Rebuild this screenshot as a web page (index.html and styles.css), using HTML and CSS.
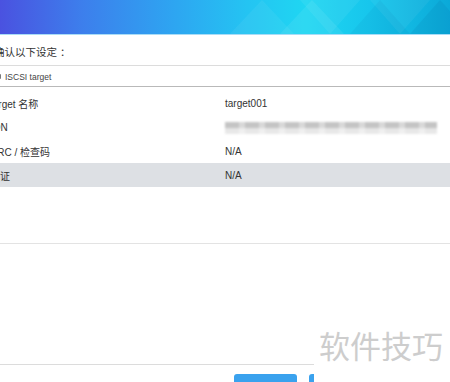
FILE: index.html
```html
<!DOCTYPE html>
<html lang="zh-CN">
<head>
<meta charset="utf-8">
<link rel="stylesheet" href="styles.css">
</head>
<body>
<div class="page">
  <header class="header">
    <svg class="header-deco" width="450" height="34" viewBox="0 0 450 34" aria-hidden="true">
      <polygon points="230,34 262,0 294,34" fill="#ffffff" opacity="0.05"/>
      <polygon points="280,34 312,0 344,34" fill="#ffffff" opacity="0.07"/>
      <polygon points="300,0 330,34 360,0" fill="#ffffff" opacity="0.06"/>
      <polygon points="350,34 380,0 410,34" fill="#003c80" opacity="0.06"/>
      <polygon points="370,0 400,34 430,0" fill="#ffffff" opacity="0.05"/>
      <polygon points="410,34 440,0 470,34" fill="#003c80" opacity="0.08"/>
    </svg>
  </header>
  <main class="content">
    <div class="intro">确认以下设定 ：</div>
    <div class="section-title"><span class="bullet"></span>ISCSI target</div>
    <div class="table">
      <div class="row"><span class="label">target 名称</span><span class="value">target001</span></div>
      <div class="row"><span class="label">IQN</span><span class="value"><span class="blurred"></span></span></div>
      <div class="row"><span class="label">CRC / 检查码</span><span class="value">N/A</span></div>
      <div class="row row-alt"><span class="label">认证</span><span class="value">N/A</span></div>
    </div>
    <div class="divider"></div>
    <div class="footer-line"></div>
    <div class="buttons">
      <span class="btn btn-primary"></span>
      <span class="btn btn-secondary"></span>
    </div>
  </main>
  <div class="watermark">软件技巧</div>
</div>
</body>
</html>
```

FILE: styles.css
```css
html, body {
  margin: 0;
  padding: 0;
  background: #ffffff;
}

body {
  width: 450px;
  height: 382px;
  overflow: hidden;
  font-family: "Liberation Sans", "Noto Sans CJK SC", sans-serif;
  color: #333333;
}

.page {
  position: relative;
  width: 450px;
  height: 382px;
  overflow: hidden;
}

.header {
  position: relative;
  height: 34px;
  background: linear-gradient(90deg, #4a52e0 0%, #3d7eec 18%, #2ea4f1 38%, #24c4f2 55%, #1fd6f2 68%, #17c6ec 82%, #0ba9d8 100%);
  border-bottom: 1px solid #a9dcf6;
}

.header-deco {
  position: absolute;
  left: 0;
  top: 0;
}

.content {
  margin-left: -6px;
  width: 456px;
}

.intro {
  height: 31px;
  display: flex;
  align-items: center;
  padding-top: 3px;
  box-sizing: border-box;
  font-size: 10.5px;
  border-bottom: 1px solid #dcdcdc;
}

.section-title {
  height: 21px;
  display: flex;
  align-items: center;
  gap: 4px;
  padding-left: 2px;
  padding-top: 1px;
  box-sizing: border-box;
  font-size: 8.5px;
  color: #444444;
  border-bottom: 1px solid #b9b9b9;
}

.bullet {
  width: 5px;
  height: 5px;
  background: #7a7a7a;
  border-radius: 1px;
}

.table {
  padding-top: 4px;
}

.row {
  height: 24px;
  display: grid;
  grid-template-columns: 231px 1fr;
  align-items: center;
  padding-top: 1px;
  box-sizing: border-box;
  font-size: 10px;
}

.label {
  margin-left: -4px;
}

.row-alt {
  background: #dde0e4;
}

.blurred {
  display: block;
  width: 212px;
  height: 12px;
  background:
    repeating-linear-gradient(90deg, rgba(255,255,255,0) 0px, rgba(255,255,255,0) 14px, rgba(255,255,255,0.35) 14px, rgba(255,255,255,0.35) 20px),
    linear-gradient(180deg, #c4c4c4 0%, #c4c4c4 45%, #e6e6e6 55%, #eaeaea 100%);
  filter: blur(1px);
  margin-top: 1px;
}

.divider {
  margin-top: 56px;
  border-top: 1px solid #e3e3e3;
}

.footer-line {
  margin-top: 120px;
  width: 321px;
  border-top: 1px solid #dcdcdc;
}

.buttons {
  display: flex;
  gap: 12px;
  margin-top: 9px;
  margin-left: 240px;
}

.btn {
  display: block;
  height: 24px;
  border-radius: 3px;
  background: #3aa2ee;
}

.btn-primary {
  width: 63px;
}

.btn-secondary {
  width: 63px;
}

.watermark {
  position: absolute;
  left: 314px;
  top: 322px;
  width: 136px;
  height: 60px;
  background: #ffffff;
  font-family: "Noto Sans CJK SC", sans-serif;
  font-size: 31px;
  line-height: 46px;
  padding-left: 5px;
  box-sizing: border-box;
  color: #cdcdcd;
}
```
